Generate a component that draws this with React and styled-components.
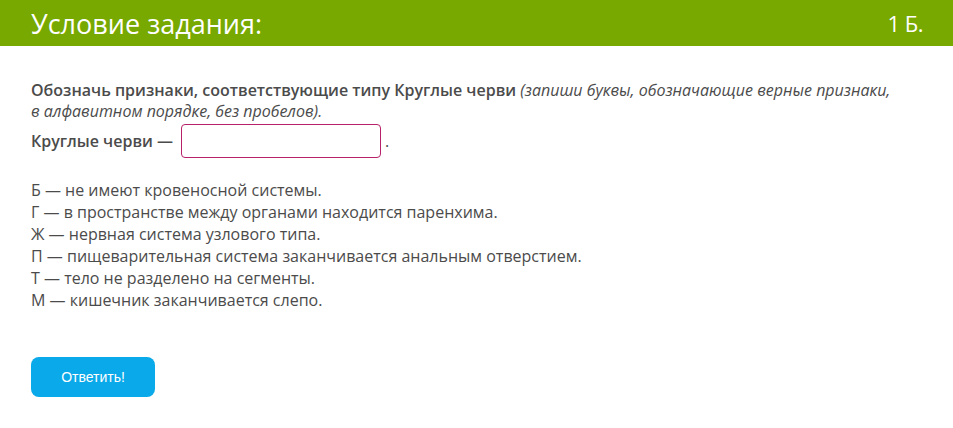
import React from "react";
import styled, { createGlobalStyle } from "styled-components";

const GlobalStyle = createGlobalStyle`
  html, body {
    margin: 0;
    padding: 0;
    background: #fff;
  }
  body {
    font-family: "Open Sans", "Liberation Sans", sans-serif;
  }
`;

const Header = styled.div`
  display: flex;
  justify-content: space-between;
  align-items: center;
  height: 46px;
  padding: 0 30px 0 31px;
  background-color: #77a900;
  color: #fff;
`;

const Title = styled.h1`
  margin: 0;
  font-size: 27px;
  font-weight: 400;
`;

const Points = styled.span`
  font-size: 22px;
  letter-spacing: -0.5px;
`;

const Body = styled.div`
  padding: 34px 50px 0 31px;
  color: #4b4b4b;
  font-size: 16px;
`;

const Question = styled.p`
  margin: 0;
  line-height: 21px;
  max-width: 865px;
`;

const Strong = styled.b`
  font-weight: 600;
`;

const Hint = styled.i`
  font-style: italic;
`;

const AnswerRow = styled.div`
  display: flex;
  align-items: center;
  gap: 8px;
  margin-top: 2px;
  font-weight: 600;
`;

const AnswerInput = styled.input`
  width: 200px;
  height: 34px;
  box-sizing: border-box;
  border: 1px solid #b6216a;
  border-radius: 4px;
  font-size: 15px;
  outline: none;
  padding: 0 8px;
`;

const Dot = styled.span`
  font-weight: 400;
  margin-left: -4px;
`;

const Options = styled.ul`
  list-style: none;
  margin: 21px 0 0;
  padding: 0;
`;

const Option = styled.li`
  line-height: 22px;
`;

const SubmitButton = styled.button`
  margin-top: 46px;
  width: 124px;
  height: 40px;
  border: none;
  border-radius: 8px;
  background-color: #0aa9e9;
  color: #fff;
  font-family: "Liberation Sans", Arial, sans-serif;
  font-size: 14px;
  cursor: pointer;
`;

const options = [
  "Б — не имеют кровеносной системы.",
  "Г — в пространстве между органами находится паренхима.",
  "Ж — нервная система узлового типа.",
  "П — пищеварительная система заканчивается анальным отверстием.",
  "Т — тело не разделено на сегменты.",
  "М — кишечник заканчивается слепо.",
];

export default function App() {
  return (
    <>
      <GlobalStyle />
      <Header>
        <Title>Условие задания:</Title>
        <Points>1 Б.</Points>
      </Header>
      <Body>
        <Question>
          <Strong>Обозначь признаки, соответствующие типу Круглые черви</Strong>{" "}
          <Hint>
            (запиши буквы, обозначающие верные признаки, в алфавитном порядке, без пробелов).
          </Hint>
        </Question>
        <AnswerRow>
          Круглые черви —
          <AnswerInput type="text" />
          <Dot>.</Dot>
        </AnswerRow>
        <Options>
          {options.map((o, i) => (
            <Option key={i}>{o}</Option>
          ))}
        </Options>
        <SubmitButton>Ответить!</SubmitButton>
      </Body>
    </>
  );
}
